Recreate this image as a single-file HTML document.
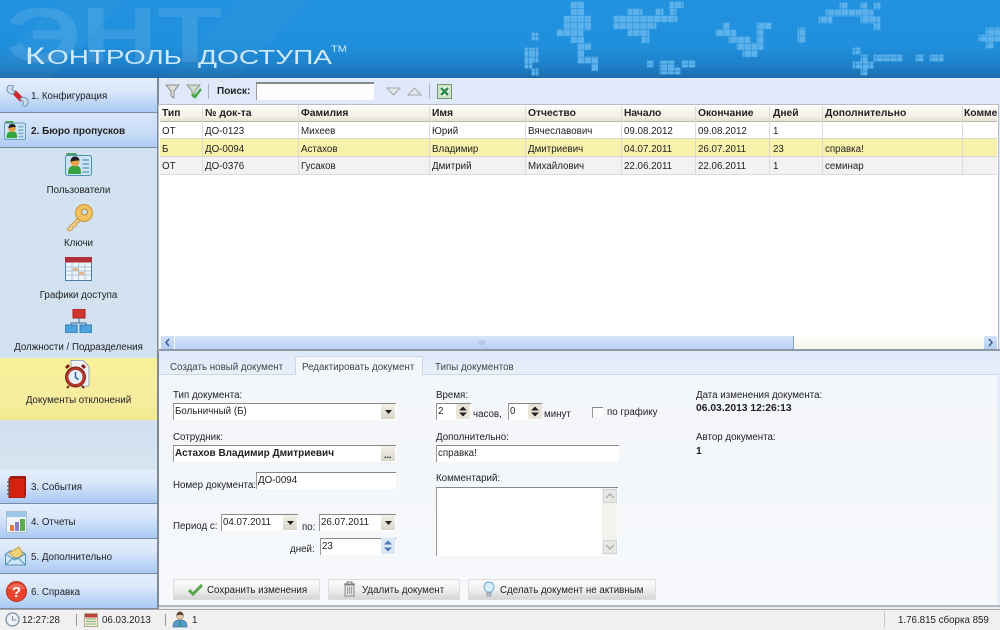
<!DOCTYPE html>
<html><head><meta charset="utf-8"><title>Контроль доступа</title>
<style>
html,body{margin:0;padding:0;background:#f0f0f0}
#r{position:relative;width:1000px;height:630px;overflow:hidden;font:9.75px "Liberation Sans",sans-serif;color:#222;background:#f0f0f0}
#r div,#r svg{position:absolute}
.t{white-space:nowrap;line-height:13px;height:13px;margin-top:1px}
.b{font-weight:bold;font-size:10.3px}
.nb{left:0;width:157px;background:linear-gradient(#e3eefc,#dbe8fb 35%,#a9c9f4);border-bottom:1px solid #7d8c9c}
.c{text-align:center;left:0;width:157px}
.inp{background:#fff;border-top:1px solid #888;border-left:1px solid #999;box-sizing:border-box}
.ar{background:linear-gradient(#f4f1e8,#d8d5c8);box-sizing:border-box}
.btn{background:linear-gradient(#fbfbfb,#f0f0f0 50%,#d4d4d4);border:1px solid #dcdcdc;box-sizing:border-box;height:21px;top:579px}
.v{width:1px;background:#dadada}
</style></head><body><div id="r">

<!-- header -->
<div style="left:0;top:0;width:1000px;height:78px;background:linear-gradient(#2291de 0,#2090dd 58%,#1e82cb 82%,#1b6cae 100%)"></div>
<svg style="left:0;top:0" width="1000" height="78" viewBox="0 0 1000 78">
<defs><pattern id="p" patternUnits="userSpaceOnUse" x="570.7" y="1.8" width="6.95" height="6.95"><rect width="6.35" height="6.35" fill="#5cb1ea"/></pattern></defs>
<polygon points="60,0 125,0 50,78 0,78 0,60" fill="#fff" opacity=".03"/>
<polygon points="240,0 310,0 235,78 165,78" fill="#fff" opacity=".025"/>
<text x="6" y="62" font-family="Liberation Sans" font-weight="bold" font-size="78" textLength="216" lengthAdjust="spacingAndGlyphs" fill="#fff" opacity=".1">ЭНТ</text>
<text x="25" y="64" font-family="Liberation Sans" font-size="24" fill="#cfe8fa" textLength="20" lengthAdjust="spacingAndGlyphs">К</text>
<text x="47" y="64" font-family="Liberation Sans" font-size="20" fill="#cfe8fa" textLength="135" lengthAdjust="spacingAndGlyphs">ОНТРОЛЬ</text>
<text x="198" y="64" font-family="Liberation Sans" font-size="20" fill="#cfe8fa" textLength="134" lengthAdjust="spacingAndGlyphs">ДОСТУПА</text>
<text x="331" y="52" font-family="Liberation Sans" font-size="9" fill="#cfe8fa" textLength="16" lengthAdjust="spacingAndGlyphs">TM</text>
<g fill="url(#p)" stroke="url(#p)" stroke-width=".8">
<rect x="571" y="2" width="13" height="13"/><rect x="564" y="16" width="27" height="14"/><rect x="557" y="30" width="26" height="6"/><rect x="571" y="37" width="13" height="6"/><rect x="578" y="43" width="13" height="7"/><rect x="578" y="50" width="6" height="7"/><rect x="578" y="57" width="20" height="6"/><rect x="592" y="64" width="6" height="7"/><rect x="532" y="33" width="6" height="7"/><rect x="525" y="48" width="13" height="14"/><rect x="525" y="62" width="7" height="6"/><rect x="532" y="69" width="6" height="6"/>
<rect x="628" y="9" width="14" height="6"/><rect x="670" y="2" width="13" height="6"/><rect x="670" y="8" width="6" height="7"/><rect x="656" y="9" width="7" height="6"/><rect x="614" y="16" width="63" height="6"/><rect x="614" y="23" width="42" height="6"/><rect x="628" y="30" width="21" height="6"/><rect x="642" y="37" width="7" height="6"/><rect x="647" y="61" width="6" height="6"/><rect x="660" y="61" width="14" height="6"/><rect x="660" y="68" width="20" height="6"/><rect x="682" y="61" width="13" height="6"/>
<rect x="723" y="23" width="6" height="6"/><rect x="716" y="30" width="20" height="6"/><rect x="729" y="37" width="21" height="6"/><rect x="737" y="43" width="26" height="7"/><rect x="743" y="51" width="14" height="6"/><rect x="757" y="37" width="6" height="6"/><rect x="757" y="23" width="14" height="6"/><rect x="757" y="30" width="6" height="6"/><rect x="798" y="28" width="7" height="14"/>
<rect x="840" y="3" width="7" height="6"/><rect x="861" y="3" width="6" height="6"/><rect x="874" y="3" width="6" height="6"/><rect x="826" y="10" width="47" height="6"/><rect x="819" y="17" width="13" height="6"/><rect x="861" y="17" width="19" height="6"/><rect x="874" y="24" width="6" height="6"/><rect x="853" y="48" width="7" height="6"/><rect x="861" y="55" width="6" height="7"/><rect x="853" y="62" width="20" height="6"/><rect x="861" y="69" width="6" height="6"/><rect x="874" y="55" width="28" height="6"/><rect x="916" y="55" width="7" height="6"/><rect x="930" y="55" width="13" height="6"/><rect x="979" y="35" width="21" height="6"/><rect x="986" y="28" width="14" height="6"/><rect x="986" y="42" width="7" height="6"/>
</g>
</svg>

<!-- sidebar -->
<div style="left:0;top:78px;width:157px;height:531px;background:#d2e2f0"></div>
<div style="left:157px;top:78px;width:2px;height:531px;background:#7f8a96"></div>
<div class="nb" style="top:78px;height:34px"></div>
<div class="nb" style="top:113px;height:34px;background:linear-gradient(#d8e5f8,#c8dcf7 60%,#aecbf4)"></div>
<div style="left:0;top:358px;width:157px;height:62px;background:linear-gradient(#f8f098,#f6eda0 70%,#f2e88c)"></div>
<div style="left:0;top:420px;width:157px;height:50px;background:linear-gradient(#d0e0ef,#d6e4f0)"></div>
<div class="nb" style="top:470px;height:33px"></div>
<div class="nb" style="top:504px;height:34px"></div>
<div class="nb" style="top:539px;height:34px"></div>
<div class="nb" style="top:574px;height:34px"></div>
<div class="t" style="left:31px;top:89px;margin-top:1px">1. Конфигурация</div>
<div class="t b" style="left:31px;top:124px;font-size:10px">2. Бюро пропусков</div>
<div class="t c" style="top:183px">Пользователи</div>
<div class="t c" style="top:236px">Ключи</div>
<div class="t c" style="top:288px">Графики доступа</div>
<div class="t c" style="top:340px">Должности / Подразделения</div>
<div class="t c" style="top:393px">Документы отклонений</div>
<div class="t" style="left:31px;top:480px">3. События</div>
<div class="t" style="left:31px;top:515px">4. Отчеты</div>
<div class="t" style="left:31px;top:550px">5. Дополнительно</div>
<div class="t" style="left:31px;top:585px">6. Справка</div>

<svg width="0" height="0" style="left:0;top:0"><defs>
<symbol id="card" viewBox="0 0 27 24">
<path d="M1 3a2 2 0 0 1 2-2h8l2 3h-12z" fill="#4aa35a"/>
<rect x=".5" y="3.5" width="26" height="20" rx="2" fill="#cfe3f2" stroke="#4d93b8"/>
<path d="M3 22c0-6 2-8 5-8h4c3 0 4 2 4 8z" fill="#36a43e"/>
<circle cx="10" cy="10" r="4.5" fill="#e8a048"/>
<path d="M5.500 10c0-4 2-5.500 4.500-5.500s4.500 1.500 4.500 4c-3 0-6 0-9 1.500z" fill="#222"/>
<path d="M17.500 8h6.500M17.500 12h6.500M17.500 16h6.500M17.500 20h6.500" stroke="#7eb3d8" stroke-width="2"/>
</symbol>
</defs></svg>

<!-- wrench -->
<svg style="left:6px;top:85px" width="23" height="22" viewBox="0 0 23 22"><path d="M8 7L16 15" stroke="#cf2a30" stroke-width="5"/><path d="M1.500 1.500c-1 2.500-.5 5 1.500 6.500s5 1 6-1L6 4l1.500-3C5.500 0 3 0 1.500 1.500z" fill="#cfdcea" stroke="#6f94bd"/><path d="M21 20c1.500-2 1.500-5-.5-6.500s-5-1.500-6.500.5l3.500 3-1 3c2 1.500 3.500 1.500 4.500 0z" fill="#cfdcea" stroke="#6f94bd"/></svg>
<svg style="left:4px;top:120px" width="22" height="20"><use href="#card" width="22" height="20"/></svg>
<svg style="left:65px;top:152px" width="27" height="24"><use href="#card" width="27" height="24"/></svg>
<!-- key -->
<svg style="left:64px;top:203px" width="30" height="30" viewBox="0 0 30 30"><path d="M15 14L3 26l2 2 3-1 1-3 3-1 1-3 3-1" fill="#f3d08a" stroke="#c89a50" stroke-width="1"/><circle cx="20" cy="10" r="8.500" fill="#f2c25e" stroke="#c8923e"/><circle cx="20.500" cy="9" r="3" fill="#cfe0ee" stroke="#b9853a"/></svg>
<!-- calendar -->
<svg style="left:65px;top:257px" width="27" height="24" viewBox="0 0 27 24"><rect x=".5" y=".5" width="26" height="23" fill="#eef4fb" stroke="#4a7ea8"/><rect y="0" width="27" height="5.500" fill="#b3303a"/><path d="M1 10h25M1 14h25M1 18h25M7 6v17M13.500 6v17M20 6v17" stroke="#a9c4dc"/><rect x="8" y="11" width="5" height="3" fill="#e0b98a"/><rect x="14" y="15" width="5" height="3" fill="#e0b98a"/></svg>
<!-- org -->
<svg style="left:65px;top:309px" width="27" height="24" viewBox="0 0 27 24"><rect x="8" y="0" width="12" height="9" fill="#d3332f" stroke="#a32320"/><path d="M14 9v5M6 18v-4h15v4" fill="none" stroke="#3d6f9c" stroke-width="1"/><rect x="0" y="16" width="12" height="8" fill="#4fa3dc" stroke="#2f78ae"/><rect x="15" y="16" width="12" height="8" fill="#4fa3dc" stroke="#2f78ae"/></svg>
<!-- clock doc -->
<svg style="left:64px;top:360px" width="26" height="29" viewBox="0 0 26 29"><path d="M7 .5h12l6 6V26H7z" fill="#eef3f8" stroke="#98a8b8"/><path d="M2 8l3-3M21 8l-3-3" stroke="#8b1d15" stroke-width="3"/><circle cx="11.500" cy="17" r="10" fill="#b3372b" stroke="#7b2018"/><circle cx="11.500" cy="17" r="7" fill="#e8f0f8"/><path d="M11.500 12v5.500l3 2" stroke="#2b5f9e" stroke-width="1.500" fill="none"/><path d="M5 26l-2 2M18 26l2 2" stroke="#7b2018" stroke-width="2"/></svg>
<!-- book -->
<svg style="left:7px;top:476px" width="20" height="22" viewBox="0 0 20 22"><rect x="3" y="0" width="16" height="20" rx="1" fill="#a02018"/><rect x="2" y="2" width="16" height="20" rx="1" fill="#d8200f" stroke="#8c1a10"/><path d="M0 6h4M0 10h4M0 14h4M0 18h4" stroke="#555" stroke-width="1.300"/></svg>
<!-- chart -->
<svg style="left:6px;top:511px" width="21" height="22" viewBox="0 0 21 22"><rect x=".5" y=".5" width="20" height="21" fill="#f0f6fb" stroke="#a8c0d4"/><rect x="1" y="1" width="19" height="5" fill="#9cc7e6"/><rect x="4" y="14" width="4" height="6" fill="#e07a45"/><rect x="9" y="11" width="4" height="9" fill="#8e78c8"/><rect x="14" y="8" width="5" height="12" fill="#5cac50"/></svg>
<!-- envelope -->
<svg style="left:5px;top:546px" width="21" height="20" viewBox="0 0 21 20"><path d="M.5 8L5 5h11l4.500 3v11H.5z" fill="#cfe6f5" stroke="#4f94bd"/><path d="M4 7L14 1l4 7-7 5z" fill="#f0d27a" stroke="#c8a548"/><path d="M.5 19L8 12h5l7.500 7M.5 8L10 14l10.500-6" fill="none" stroke="#4f94bd"/></svg>
<!-- help -->
<svg style="left:6px;top:581px" width="21" height="21" viewBox="0 0 21 21"><circle cx="10.500" cy="10.500" r="10" fill="#e8432e" stroke="#b93020"/><path d="M2 8a9 8 0 0 1 17 0z" fill="#fff" opacity=".2"/><text x="10.500" y="16" text-anchor="middle" font-family="Liberation Sans" font-weight="bold" font-size="15" fill="#fff">?</text></svg>

<!-- toolbar -->
<div style="left:159px;top:78px;width:841px;height:272px;background:#dfe9f9"></div>
<svg style="left:165px;top:83px" width="40" height="18" viewBox="0 0 40 18"><path d="M1 2h13L9 8v7L6 13V8z" fill="#dcdcdc" stroke="#8f8f8f"/><path d="M22 2h13l-5 6v7l-3-2V8z" fill="#cfdcc8" stroke="#8f9f8f"/><path d="M27 11l3 3 6-8" fill="none" stroke="#4aa83e" stroke-width="2.500"/></svg>
<div style="left:208px;top:84px;width:1px;height:15px;background:#a9b3bf"></div>
<div class="t b" style="left:217px;top:84px;font-size:10px">Поиск:</div>
<div class="inp" style="left:256px;top:82px;width:118px;height:18px;border-top:2px solid #888;background:#fdfdff"></div>
<svg style="left:386px;top:87px" width="37" height="10" viewBox="0 0 37 10"><path d="M1 1h13L7.500 8z" fill="#e4e8ee" stroke="#a4a8ad"/><path d="M22 8h13L28.500 1z" fill="#e4e8ee" stroke="#a4a8ad"/></svg>
<div style="left:429px;top:84px;width:1px;height:15px;background:#a9b3bf"></div>
<svg style="left:437px;top:84px" width="15" height="15" viewBox="0 0 15 15"><rect x=".5" y=".5" width="14" height="14" fill="#cfe3cb" stroke="#6f9a6f"/><rect x="3" y="3" width="9" height="9" fill="#eaf4e8"/><path d="M4 4l7 7M11 4l-7 7" stroke="#2a8f45" stroke-width="2.500"/></svg>

<!-- grid -->
<div style="left:159px;top:105px;width:839px;height:245px;background:#fff;outline:1px solid #b5bcc4"></div>
<div style="left:160px;top:106px;width:837px;height:15px;background:linear-gradient(#fdfcf8,#f3f0e6 70%,#e4e0d2);border-bottom:1px solid #b8b8b0"></div>
<div style="left:160px;top:139px;width:837px;height:17px;background:#f8f1ac"></div>
<div style="left:160px;top:157px;width:837px;height:17px;background:#f2f2f2"></div>
<div style="left:160px;top:138px;width:837px;height:1px;background:#d8d8d8"></div>
<div style="left:160px;top:156px;width:837px;height:1px;background:#d6d6c4"></div>
<div style="left:160px;top:174px;width:837px;height:1px;background:#dcdcdc"></div>
<div class="v" style="left:202px;top:106px;height:68px"></div><div class="v" style="left:298px;top:106px;height:68px"></div><div class="v" style="left:429px;top:106px;height:68px"></div><div class="v" style="left:525px;top:106px;height:68px"></div><div class="v" style="left:621px;top:106px;height:68px"></div><div class="v" style="left:695px;top:106px;height:68px"></div><div class="v" style="left:769px;top:106px;height:68px"></div><div class="v" style="left:822px;top:106px;height:68px"></div><div class="v" style="left:962px;top:106px;height:68px"></div>

<div class="t b" style="left:162px;top:106px">Тип</div><div class="t b" style="left:205px;top:106px">№ док-та</div><div class="t b" style="left:301px;top:106px">Фамилия</div><div class="t b" style="left:432px;top:106px">Имя</div><div class="t b" style="left:528px;top:106px">Отчество</div><div class="t b" style="left:624px;top:106px">Начало</div><div class="t b" style="left:698px;top:106px">Окончание</div><div class="t b" style="left:773px;top:106px">Дней</div><div class="t b" style="left:825px;top:106px">Дополнительно</div><div class="t b" style="left:964px;top:106px;width:33px;overflow:hidden">Комментарий</div>

<div class="t" style="left:162px;top:124px">ОТ</div><div class="t" style="left:205px;top:124px">ДО-0123</div><div class="t" style="left:301px;top:124px">Михеев</div><div class="t" style="left:432px;top:124px">Юрий</div><div class="t" style="left:528px;top:124px">Вячеславович</div><div class="t" style="left:624px;top:124px">09.08.2012</div><div class="t" style="left:698px;top:124px">09.08.2012</div><div class="t" style="left:773px;top:124px">1</div>

<div class="t" style="left:162px;top:142px">Б</div><div class="t" style="left:205px;top:142px">ДО-0094</div><div class="t" style="left:301px;top:142px">Астахов</div><div class="t" style="left:432px;top:142px">Владимир</div><div class="t" style="left:528px;top:142px">Дмитриевич</div><div class="t" style="left:624px;top:142px">04.07.2011</div><div class="t" style="left:698px;top:142px">26.07.2011</div><div class="t" style="left:773px;top:142px">23</div><div class="t" style="left:825px;top:142px">справка!</div>

<div class="t" style="left:162px;top:159px">ОТ</div><div class="t" style="left:205px;top:159px">ДО-0376</div><div class="t" style="left:301px;top:159px">Гусаков</div><div class="t" style="left:432px;top:159px">Дмитрий</div><div class="t" style="left:528px;top:159px">Михайлович</div><div class="t" style="left:624px;top:159px">22.06.2011</div><div class="t" style="left:698px;top:159px">22.06.2011</div><div class="t" style="left:773px;top:159px">1</div><div class="t" style="left:825px;top:159px">семинар</div>

<!-- h scrollbar -->
<div style="left:160px;top:335px;width:837px;height:14px;background:linear-gradient(#fffefb,#f8f5ee)"></div>
<div style="left:161px;top:336px;width:13px;height:13px;background:linear-gradient(#d2e1f7,#b4cef3)"></div>
<div style="left:984px;top:336px;width:13px;height:13px;background:linear-gradient(#d2e1f7,#b4cef3)"></div>
<div style="left:175px;top:336px;width:619px;height:13px;background:linear-gradient(#d5e4fa,#b6d0f6);border-right:1px solid #8aa4c8;box-sizing:border-box"></div>
<svg style="left:161px;top:336px" width="836" height="13" viewBox="0 0 836 13"><path d="M8 3L5 6.500 8 10M828 3l3 3.500-3 3.500" fill="none" stroke="#3d5f8f" stroke-width="1.500"/><path d="M319 4v5M321 4v5M323 4v5" stroke="#a4bad8"/></svg>
<div style="left:159px;top:349px;width:841px;height:2px;background:#8d9aa6"></div>

<!-- tabs band -->
<div style="left:159px;top:351px;width:841px;height:24px;background:linear-gradient(#dfe9f9,#e8f0fb)"></div>
<div style="left:159px;top:374px;width:838px;height:1px;background:#cdd8e4"></div>
<div style="left:295px;top:356px;width:128px;height:20px;background:#f3f6fa;border:1px solid #cfd9e4;border-bottom:0;box-sizing:border-box;border-radius:2px 2px 0 0"></div>
<div class="t" style="left:170px;top:360px;color:#444">Создать новый документ</div>
<div class="t" style="left:302px;top:360px;color:#444">Редактировать документ</div>
<div class="t" style="left:435px;top:360px;color:#444">Типы документов</div>

<!-- panel -->
<div style="left:159px;top:375px;width:838px;height:231px;background:linear-gradient(#f3f6fa,#f6f8fb)"></div>
<div style="left:997px;top:351px;width:3px;height:258px;background:#e4ecf8"></div>
<div style="left:159px;top:605px;width:841px;height:2px;background:#b0b8c0"></div>
<div style="left:159px;top:607px;width:841px;height:2px;background:#e8edf4"></div>

<div class="t" style="left:173px;top:388px">Тип документа:</div>
<div class="inp" style="left:173px;top:403px;width:223px;height:17px"></div>
<div class="t" style="left:175px;top:404px">Больничный (Б)</div>
<div class="ar" style="left:381px;top:404px;width:14px;height:15px"></div>

<div class="t" style="left:173px;top:430px">Сотрудник:</div>
<div class="inp" style="left:173px;top:445px;width:223px;height:17px"></div>
<div class="t b" style="left:175px;top:446px;font-size:10px">Астахов Владимир Дмитриевич</div>
<div class="ar" style="left:381px;top:446px;width:14px;height:15px"></div>
<div class="t b" style="left:384px;top:448px;font-size:9px">...</div>

<div class="t" style="left:173px;top:478px">Номер документа:</div>
<div class="inp" style="left:256px;top:472px;width:140px;height:17px"></div>
<div class="t" style="left:258px;top:473px">ДО-0094</div>

<div class="t" style="left:173px;top:519px">Период с:</div>
<div class="inp" style="left:221px;top:514px;width:77px;height:17px"></div>
<div class="t" style="left:223px;top:515px">04.07.2011</div>
<div class="ar" style="left:283px;top:515px;width:14px;height:15px"></div>
<div class="t" style="left:302px;top:520px">по:</div>
<div class="inp" style="left:319px;top:514px;width:77px;height:17px"></div>
<div class="t" style="left:321px;top:515px">26.07.2011</div>
<div class="ar" style="left:381px;top:515px;width:14px;height:15px"></div>
<div class="t" style="left:290px;top:542px">дней:</div>
<div class="inp" style="left:320px;top:538px;width:76px;height:17px"></div>
<div class="t" style="left:322px;top:539px">23</div>

<svg style="left:173px;top:400px" width="225" height="160" viewBox="173 400 225 160"><g fill="#222"><path d="M385 410h7l-3.500 4zM287 521h7l-3.500 4zM385 521h7l-3.500 4z"/></g></svg>
<svg style="left:381px;top:538px" width="14" height="16" viewBox="0 0 14 16"><rect width="14" height="16" fill="#dbe6f6"/><path d="M3 6.500l4-4 4 4zM3 9.500l4 4 4-4z" fill="#4e78b8"/></svg>

<div class="t" style="left:436px;top:388px">Время:</div>
<div class="inp" style="left:436px;top:403px;width:35px;height:17px"></div>
<div class="t" style="left:438px;top:404px">2</div>
<svg style="left:456px;top:404px" width="14" height="15" viewBox="0 0 14 15"><rect width="14" height="15" fill="#e8e5d8"/><path d="M3 6.500l4-4 4 4zM3 8.500l4 4 4-4z" fill="#222"/></svg>
<div class="t" style="left:473px;top:407px">часов,</div>
<div class="inp" style="left:508px;top:403px;width:34px;height:17px"></div>
<div class="t" style="left:510px;top:404px">0</div>
<svg style="left:528px;top:404px" width="14" height="15" viewBox="0 0 14 15"><rect width="14" height="15" fill="#e8e5d8"/><path d="M3 6.500l4-4 4 4zM3 8.500l4 4 4-4z" fill="#222"/></svg>
<div class="t" style="left:544px;top:407px">минут</div>
<div class="inp" style="left:592px;top:407px;width:11px;height:11px;background:#fafafa"></div>
<div class="t" style="left:607px;top:405px">по графику</div>

<div class="t" style="left:436px;top:430px">Дополнительно:</div>
<div class="inp" style="left:436px;top:445px;width:183px;height:17px"></div>
<div class="t" style="left:438px;top:446px">справка!</div>

<div class="t" style="left:436px;top:471px">Комментарий:</div>
<div class="inp" style="left:436px;top:487px;width:182px;height:69px"></div>
<div style="left:602px;top:488px;width:15px;height:67px;background:#f2f2ee"></div>
<svg style="left:603px;top:489px" width="14" height="65" viewBox="0 0 14 65"><rect x=".5" y=".5" width="13" height="13" fill="#e8e8e2" stroke="#cfd4d8"/><rect x=".5" y="51.500" width="13" height="13" fill="#e8e8e2" stroke="#cfd4d8"/><path d="M3 9l4-4 4 4M3 56l4 4 4-4" fill="none" stroke="#a8b0b8" stroke-width="1.500"/></svg>

<div class="t" style="left:696px;top:388px">Дата изменения документа:</div>
<div class="t b" style="left:696px;top:401px">06.03.2013 12:26:13</div>
<div class="t" style="left:696px;top:430px">Автор документа:</div>
<div class="t b" style="left:696px;top:444px">1</div>

<!-- buttons -->
<div class="btn" style="left:173px;width:147px"></div>
<div class="btn" style="left:328px;width:132px"></div>
<div class="btn" style="left:468px;width:188px"></div>
<svg style="left:188px;top:583px" width="15" height="13" viewBox="0 0 15 13"><path d="M1 7l4 4L14 2" fill="none" stroke="#57a84a" stroke-width="3"/></svg>
<svg style="left:343px;top:581px" width="13" height="16" viewBox="0 0 13 16"><path d="M1 3h11M4 3V1h5v2" fill="none" stroke="#777"/><path d="M2 4h9v11H2z" fill="#e4e4e4" stroke="#888"/><path d="M4.500 6v7M6.500 6v7M8.500 6v7" stroke="#999"/></svg>
<svg style="left:483px;top:581px" width="12" height="17" viewBox="0 0 12 17"><path d="M3.500 11C2 9 1 8 1 6a5 5 0 0 1 10 0c0 2-1 3-2.500 5z" fill="#d8eefa" stroke="#6ea6c8"/><path d="M4 12h4v3H4z" fill="#c4c8cc" stroke="#8a9096" stroke-width=".7"/></svg>
<div class="t" style="left:207px;top:583px">Сохранить изменения</div>
<div class="t" style="left:362px;top:583px">Удалить документ</div>
<div class="t" style="left:500px;top:583px">Сделать документ не активным</div>

<!-- status bar -->
<div style="left:0;top:609px;width:1000px;height:21px;background:#f0f0f0;border-top:1px solid #a8a8a8;box-sizing:border-box"></div>
<svg style="left:5px;top:612px" width="15" height="15" viewBox="0 0 15 15"><circle cx="7.500" cy="7.500" r="6.500" fill="#eef1f5" stroke="#7e8ea0" stroke-width="1.300"/><path d="M7.500 4v4H11" fill="none" stroke="#7e8ea0"/></svg>
<div class="t" style="left:22px;top:613px">12:27:28</div>
<div style="left:76px;top:614px;width:1px;height:12px;background:#999"></div>
<svg style="left:84px;top:612px" width="14" height="15" viewBox="0 0 14 15"><rect x=".5" y="1.500" width="13" height="13" fill="#f3ead8" stroke="#b9a58c"/><rect x="1" y="2" width="12" height="3.500" fill="#b8433a"/><path d="M2 7h10M2 9.500h10M2 12h10" stroke="#7ab07a"/></svg>
<div class="t" style="left:102px;top:613px">06.03.2013</div>
<div style="left:165px;top:614px;width:1px;height:12px;background:#999"></div>
<svg style="left:172px;top:611px" width="16" height="17" viewBox="0 0 16 17"><path d="M1 16c0-5 2-7 7-7s7 2 7 7z" fill="#5b9ac8" stroke="#3f75a0" stroke-width=".7"/><path d="M7 10h2v6H7z" fill="#2e9a8e"/><circle cx="8" cy="5" r="3.500" fill="#e8c8a0" stroke="#a87" stroke-width=".6"/><path d="M4.500 5c0-3 2-4.500 3.500-4.500S11.500 2 11.500 5C10 3.500 6 3.500 4.500 5z" fill="#5a4632"/></svg>
<div class="t" style="left:192px;top:613px">1</div>
<div style="left:884px;top:611px;width:1px;height:17px;background:#c8c8c8"></div>
<div class="t" style="left:898px;top:613px">1.76.815 сборка 859</div>

</div></body></html>
